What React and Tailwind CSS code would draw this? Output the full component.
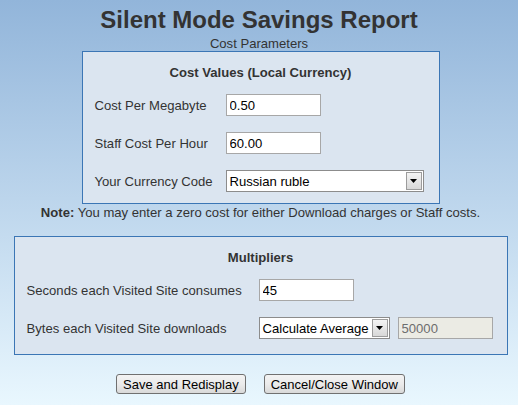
import React from 'react';

// Old-style windows select box
function FakeSelect({ value, width }) {
  return (
    <div className={`flex items-center h-[22px] border border-[#8c8c8c] bg-white ${width}`}>
      <span className="flex-1 pl-[3px] text-[13.1px] leading-[15px] text-black truncate">{value}</span>
      <span className="flex items-center justify-center w-[16px] h-[18px] mr-[1px] border border-[#9c9c9c] bg-gradient-to-b from-[#f4f4f4] to-[#d8d8d8]">
        <svg width="7" height="4" viewBox="0 0 7 4">
          <path d="M0 0h7L3.5 4z" fill="#000" />
        </svg>
      </span>
    </div>
  );
}

function TextBox({ value, disabled }) {
  return (
    <input
      readOnly
      value={value}
      className={`h-[22px] w-[95px] border border-[#a7a7a7] px-[3px] text-[13.1px] leading-[15px] outline-none ${
        disabled ? 'bg-[#ebebe4] text-[#6d6d6d]' : 'bg-white text-black'
      }`}
      style={{ fontFamily: 'inherit' }}
    />
  );
}

function Row({ label, labelWidth, children }) {
  return (
    <div className="flex items-center h-[22px]">
      <span className={`${labelWidth} text-[13.1px] leading-[15px] text-[#333]`}>{label}</span>
      {children}
    </div>
  );
}

function Btn({ children }) {
  return (
    <button className="h-[20px] px-[6px] border border-[#707070] rounded-[3px] bg-gradient-to-b from-[#f3f3f3] via-[#ebebeb] to-[#d9d9d9] text-[13px] leading-[15px] text-black">
      {children}
    </button>
  );
}

export default function App() {
  return (
    <div
      className="h-[405px] w-full overflow-hidden bg-gradient-to-b from-[#92b5da] to-[#e9f7fe] text-[#333] flex flex-col items-center"
      style={{ fontFamily: '"Liberation Sans", Arial, sans-serif' }}
    >
      <h1 className="pt-[6px] text-[24px] leading-[28px] font-bold text-[#333]">Silent Mode Savings Report</h1>
      <p className="mt-[2px] text-[13.1px] leading-[15px]">Cost Parameters</p>

      {/* Cost values box */}
      <div className="ml-[3px] w-[358px] border border-[#3b76b5] bg-[#dbe5f0] pt-[13px] pb-[11px] px-[12px] flex flex-col">
        <p className="text-center text-[13.1px] leading-[15px] font-bold">Cost Values (Local Currency)</p>
        <div className="mt-[14px] flex flex-col gap-[16px]">
          <Row label="Cost Per Megabyte" labelWidth="w-[131px]">
            <TextBox value="0.50" />
          </Row>
          <Row label="Staff Cost Per Hour" labelWidth="w-[131px]">
            <TextBox value="60.00" />
          </Row>
          <Row label="Your Currency Code" labelWidth="w-[131px]">
            <FakeSelect value="Russian ruble" width="w-[198px]" />
          </Row>
        </div>
      </div>

      <p className="mt-[1px] ml-[3px] text-[13.1px] leading-[15px]">
        <b>Note:</b> You may enter a zero cost for either Download charges or Staff costs.
      </p>

      {/* Multipliers box */}
      <div className="mt-[16px] ml-[3px] w-[494px] border border-[#3b76b5] bg-[#dbe5f0] pt-[13px] pb-[15px] px-[12px] flex flex-col">
        <p className="text-center text-[13.1px] leading-[15px] font-bold">Multipliers</p>
        <div className="mt-[14px] flex flex-col gap-[16px]">
          <Row label="Seconds each Visited Site consumes" labelWidth="w-[232px]">
            <TextBox value="45" />
          </Row>
          <Row label="Bytes each Visited Site downloads" labelWidth="w-[232px]">
            <FakeSelect value="Calculate Average" width="w-[131px]" />
            <span className="w-[8px]" />
            <TextBox value="50000" disabled />
          </Row>
        </div>
      </div>

      <div className="mt-[19px] ml-[3px] flex gap-[18px]">
        <Btn>Save and Redisplay</Btn>
        <Btn>Cancel/Close Window</Btn>
      </div>
    </div>
  );
}
